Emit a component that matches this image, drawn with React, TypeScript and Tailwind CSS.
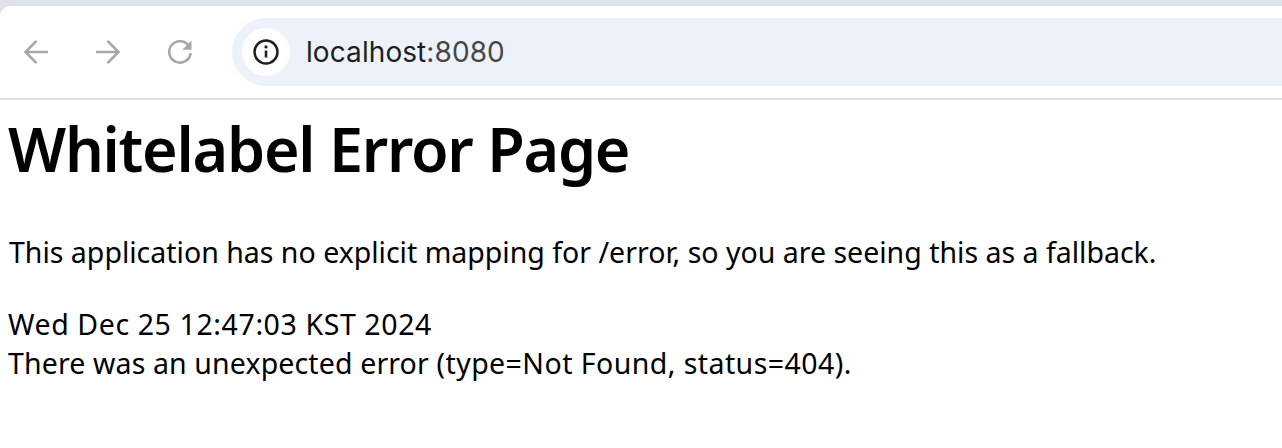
function Arrow({ flip }: { flip?: boolean }) {
  return (
    <svg width="36" height="36" viewBox="0 0 36 36" fill="none" stroke="#a8a8a8" strokeWidth="2.6" className={flip ? "-scale-x-100" : ""}>
      <path d="M30 18H7.5M18.5 7 7.5 18l11 11" />
    </svg>
  );
}

function Reload() {
  return (
    <svg width="36" height="36" viewBox="0 0 36 36" fill="none">
      <path d="M27.2 12.5A10.7 10.7 0 1 0 28.6 19" stroke="#a8a8a8" strokeWidth="2.6" />
      <path d="M29.5 6.6v9.2h-9.2z" fill="#a8a8a8" />
    </svg>
  );
}

function InfoIcon() {
  return (
    <svg width="28" height="28" viewBox="0 0 28 28" fill="none">
      <circle cx="14" cy="14" r="11.5" stroke="#1f1f1f" strokeWidth="2.5" />
      <path d="M14 12.5v7" stroke="#1f1f1f" strokeWidth="2.6" />
      <circle cx="14" cy="8.9" r="1.6" fill="#1f1f1f" />
    </svg>
  );
}

export default function App() {
  return (
    <div className="h-[448px] overflow-hidden bg-white text-black font-['Noto_Sans',sans-serif]">
      <div className="bg-[#dee3e8] pt-[6px]">
        <div className="flex h-[94px] items-start rounded-tl-[10px] border-b-2 border-[#e1e1e1] bg-white pl-[18px] pt-[12px]">
          <div className="flex h-[68px] items-center gap-[36px]">
            <Arrow />
            <Arrow flip />
            <Reload />
          </div>
          <div className="ml-[34px] flex h-[68px] flex-1 items-center rounded-l-[34px] bg-[#edf1f9] pl-[10px]">
            <div className="flex h-[48px] w-[48px] items-center justify-center rounded-full bg-white">
              <InfoIcon />
            </div>
            <span className="ml-[16px] font-['Inter',sans-serif] text-[28px] leading-none tracking-[0.08px] text-[#474747]">
              <span className="text-[#1f1f1f]">localhost</span>:8080
            </span>
          </div>
        </div>
      </div>
      <div className="px-[8px]">
        <h1 className="mt-[13px] text-[61px] font-semibold leading-[72px] tracking-[-1.25px]">Whitelabel Error Page</h1>
        <p className="ml-[1px] mt-[48px] text-[28.5px] leading-[39px]">This application has no explicit mapping for /error, so you are seeing this as a fallback.</p>
        <p className="mt-[33px] text-[28.5px] leading-[39px] tracking-[0.6px]">Wed Dec 25 12:47:03 KST 2024</p>
        <p className="text-[28.5px] leading-[39px] tracking-[0.13px]">
          There was an unexpected error <span className="tracking-[0.44px]">(type=Not Found, status=404).</span>
        </p>
      </div>
    </div>
  );
}
